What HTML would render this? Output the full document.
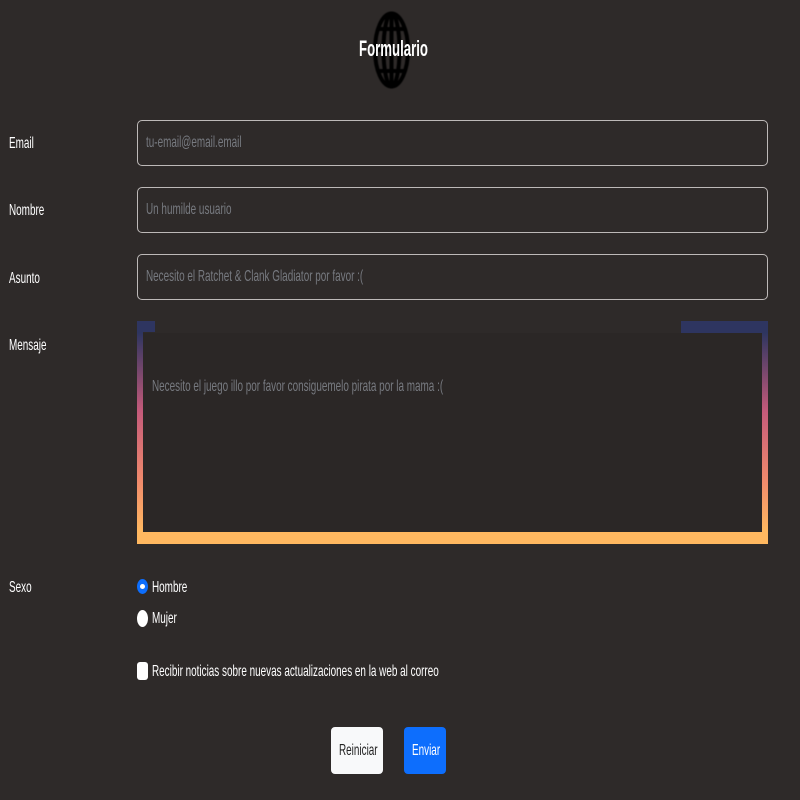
<!DOCTYPE html>
<html><head><meta charset="utf-8"><style>
*{box-sizing:border-box;margin:0;padding:0}
body{width:800px;height:800px;background:#2e2a29;font-family:"Liberation Sans",sans-serif;color:#fff;position:relative;overflow:hidden}
.n{display:inline-block;transform:scaleX(0.62);transform-origin:left center;white-space:nowrap}
.lbl{position:absolute;left:9px;font-size:16px}
.inp{position:absolute;left:137px;width:631px;height:46px;border:1px solid #bdb9b8;border-radius:5px;color:#777a80;font-size:16px;padding-left:8px;line-height:44px}
.grad{background:linear-gradient(#2e3560 0px,#2e3560 12px,#c45a7a 90px,#f08a6c 160px,#ffb860 210px)}
</style></head><body>
<svg style="position:absolute;left:373px;top:11px;filter:blur(0.6px)" width="37" height="78" viewBox="0 0 37 78">
<g fill="none" stroke="#000" stroke-width="4">
<ellipse cx="18.5" cy="39" rx="16.5" ry="36.5"/>
<ellipse cx="18.5" cy="39" rx="8" ry="36.5"/>
<line x1="18.5" y1="2" x2="18.5" y2="76"/>
<line x1="2" y1="39" x2="35" y2="39"/>
<line x1="5" y1="18" x2="32" y2="18"/>
<line x1="5" y1="60" x2="32" y2="60"/>
</g></svg>
<div style="position:absolute;left:359px;top:36px;font-size:22px;font-weight:bold"><span class="n" style="transform:scaleX(0.6)">Formulario</span></div>

<div class="lbl" style="top:135px"><span class="n">Email</span></div>
<div class="inp" style="top:120px"><span class="n">tu-email@email.email</span></div>
<div class="lbl" style="top:202px"><span class="n">Nombre</span></div>
<div class="inp" style="top:187px"><span class="n">Un humilde usuario</span></div>
<div class="lbl" style="top:270px"><span class="n">Asunto</span></div>
<div class="inp" style="top:254px"><span class="n">Necesito el Ratchet &amp; Clank Gladiator por favor :(</span></div>
<div class="lbl" style="top:337px"><span class="n">Mensaje</span></div>

<div style="position:absolute;left:137px;top:321px;width:631px;height:223px">
<div class="grad" style="position:absolute;left:0;top:0;width:6px;height:223px"></div>
<div class="grad" style="position:absolute;right:0;top:0;width:6px;height:223px"></div>
<div style="position:absolute;left:0;top:0;width:18px;height:11px;background:#2e3560"></div>
<div style="position:absolute;right:0;top:0;width:87px;height:12px;background:#2e3560"></div>
<div style="position:absolute;left:0;bottom:0;width:631px;height:12px;background:#ffb860"></div>
<div style="position:absolute;left:6px;top:12px;width:619px;height:199px;background:#2b2726;color:#777a80;font-size:16px;padding:45px 0 0 9px"><span class="n">Necesito el juego illo por favor consiguemelo pirata por la mama :(</span></div>
</div>

<div class="lbl" style="top:579px"><span class="n">Sexo</span></div>
<div style="position:absolute;left:137px;top:579px;width:11px;height:15px;border-radius:50%;background:#0d6efd"><div style="position:absolute;left:3px;top:5px;width:5px;height:5px;border-radius:50%;background:#fff"></div></div>
<div style="position:absolute;left:152px;top:579px;font-size:16px"><span class="n">Hombre</span></div>
<div style="position:absolute;left:137px;top:610px;width:11px;height:17px;border-radius:50%;background:#fff"></div>
<div style="position:absolute;left:152px;top:610px;font-size:16px"><span class="n">Mujer</span></div>
<div style="position:absolute;left:137px;top:662px;width:11px;height:18px;border-radius:3px;background:#fff"></div>
<div style="position:absolute;left:152px;top:663px;font-size:16px"><span class="n">Recibir noticias sobre nuevas actualizaciones en la web al correo</span></div>

<div style="position:absolute;left:331px;top:727px;width:52px;height:47px;background:#f8f9fa;border-radius:4px;color:#222;font-size:16px;line-height:47px;padding-left:8px"><span class="n">Reiniciar</span></div>
<div style="position:absolute;left:404px;top:727px;width:42px;height:47px;background:#0d6efd;border-radius:4px;color:#fff;font-size:16px;line-height:47px;padding-left:8px"><span class="n">Enviar</span></div>
</body></html>
